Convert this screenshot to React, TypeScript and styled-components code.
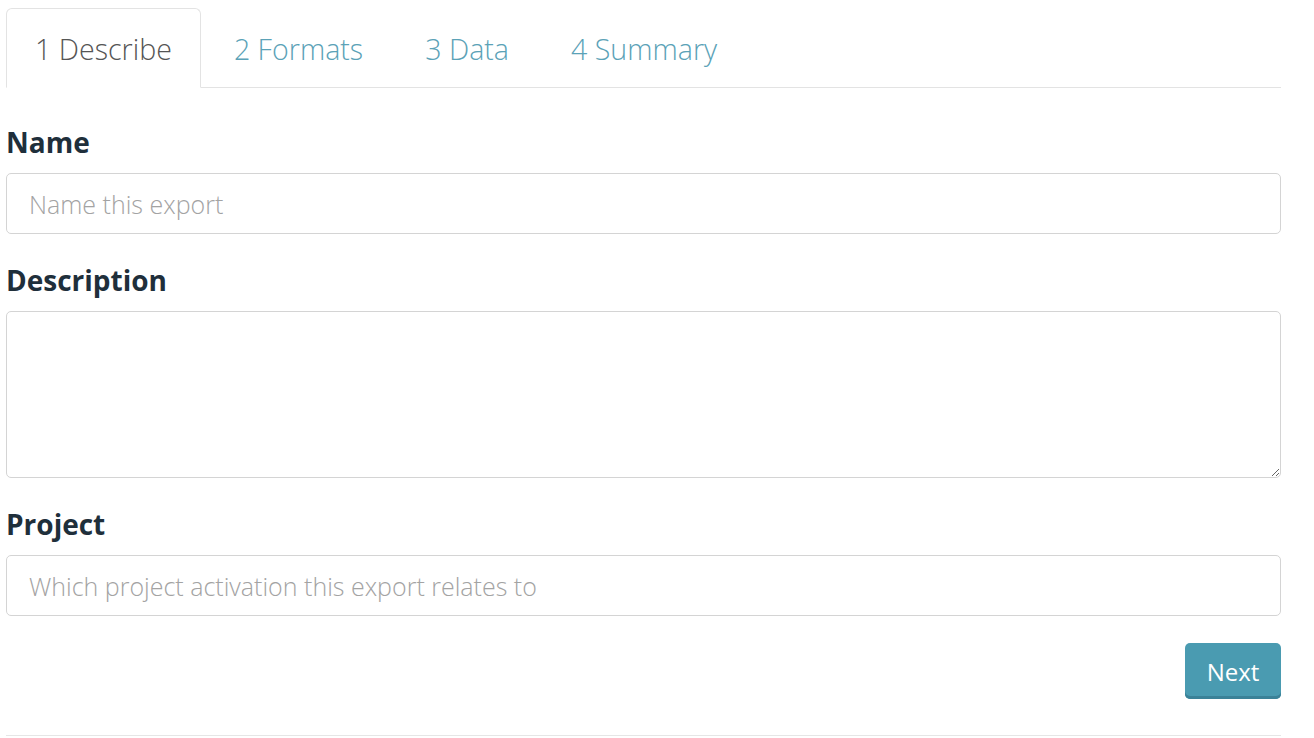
import styled, { createGlobalStyle } from 'styled-components';

const GlobalStyle = createGlobalStyle`
  body {
    margin: 0;
    background: #fff;
    font-family: "Open Sans", "Liberation Sans", sans-serif;
  }
`;

const tabs = ['1 Describe', '2 Formats', '3 Data', '4 Summary'];

function App() {
  return (
    <Page>
      <GlobalStyle />
      <TabBar>
        {tabs.map((t, i) => (
          <Tab key={t} $active={i === 0}>
            {t}
          </Tab>
        ))}
      </TabBar>
      <Form>
        <Field>
          <Label htmlFor="name">Name</Label>
          <Input id="name" placeholder="Name this export" />
        </Field>
        <Field>
          <Label htmlFor="desc">Description</Label>
          <TextArea id="desc" />
        </Field>
        <Field>
          <Label htmlFor="project">Project</Label>
          <Input id="project" placeholder="Which project activation this export relates to" />
        </Field>
        <Actions>
          <NextButton type="button">Next</NextButton>
        </Actions>
      </Form>
      <Rule />
    </Page>
  );
}

const Page = styled.div`
  width: 1275px;
  padding: 8px 0 0 6px;
`;

const TabBar = styled.ul`
  display: flex;
  margin: 0;
  padding: 0;
  list-style: none;
  border-bottom: 1px solid #e3e3e3;
`;

const Tab = styled.li<{ $active?: boolean }>`
  height: 78px;
  display: flex;
  align-items: center;
  padding: 0 28px;
  margin-right: 4px;
  margin-bottom: -1px;
  font-size: 28.6px;
  font-weight: 300;
  color: ${p => (p.$active ? '#555' : '#5ba2b7')};
  background: ${p => (p.$active ? '#fff' : 'transparent')};
  border: 1px solid ${p => (p.$active ? '#e3e3e3' : 'transparent')};
  border-bottom-color: ${p => (p.$active ? '#fff' : 'transparent')};
  border-radius: 6px 6px 0 0;
  cursor: pointer;
`;

const Form = styled.form`
  padding-top: 35px;
`;

const Field = styled.div`
  margin-bottom: 27px;
`;

const Label = styled.label`
  display: block;
  font-size: 28px;
  font-weight: 700;
  line-height: 38px;
  color: #1f2f3b;
  margin-bottom: 12px;
`;

const Input = styled.input`
  box-sizing: border-box;
  display: block;
  width: 100%;
  height: 61px;
  padding: 0 22px;
  font-family: inherit;
  font-size: 25px;
  font-weight: 300;
  color: #333;
  border: 1px solid #d4d4d4;
  border-radius: 5px;
  outline: none;

  &::placeholder {
    color: #a3a3a3;
  }
`;

const TextArea = styled.textarea`
  box-sizing: border-box;
  display: block;
  width: 100%;
  height: 167px;
  padding: 12px 22px;
  font-family: inherit;
  font-size: 25px;
  font-weight: 300;
  border: 1px solid #d4d4d4;
  border-radius: 5px;
  outline: none;
  resize: vertical;
`;

const Actions = styled.div`
  display: flex;
  justify-content: flex-end;
`;

const NextButton = styled.button`
  width: 96px;
  height: 56px;
  font-family: inherit;
  font-size: 24px;
  font-weight: 400;
  color: #fff;
  background: #4a9bb1;
  border: none;
  border-radius: 5px;
  box-shadow: inset 0 -3px 0 #3b8298;
  cursor: pointer;
`;

const Rule = styled.hr`
  margin: 36px 0 0;
  border: none;
  border-top: 1px solid #e6e6e6;
`;

export default App;
